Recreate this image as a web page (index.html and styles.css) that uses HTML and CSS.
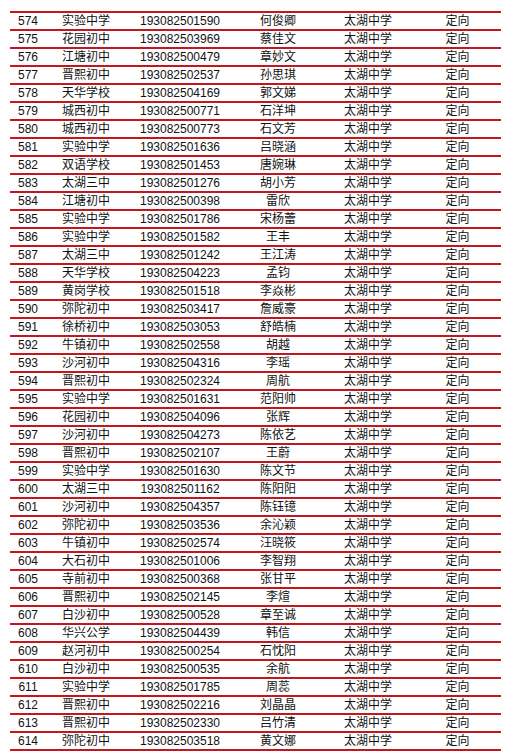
FILE: index.html
```html
<!DOCTYPE html>
<html lang="zh">
<head>
<meta charset="utf-8">
<link rel="stylesheet" href="styles.css">
</head>
<body>
<table class="list">
<colgroup><col class="c1"><col class="c2"><col class="c3"><col class="c4"><col class="c5"><col class="c6"></colgroup>
<tbody>
<tr><td>574</td><td>实验中学</td><td>193082501590</td><td>何俊卿</td><td>太湖中学</td><td>定向</td></tr>
<tr><td>575</td><td>花园初中</td><td>193082503969</td><td>蔡佳文</td><td>太湖中学</td><td>定向</td></tr>
<tr><td>576</td><td>江塘初中</td><td>193082500479</td><td>章妙文</td><td>太湖中学</td><td>定向</td></tr>
<tr><td>577</td><td>晋熙初中</td><td>193082502537</td><td>孙思琪</td><td>太湖中学</td><td>定向</td></tr>
<tr><td>578</td><td>天华学校</td><td>193082504169</td><td>郭文娣</td><td>太湖中学</td><td>定向</td></tr>
<tr><td>579</td><td>城西初中</td><td>193082500771</td><td>石洋坤</td><td>太湖中学</td><td>定向</td></tr>
<tr><td>580</td><td>城西初中</td><td>193082500773</td><td>石文芳</td><td>太湖中学</td><td>定向</td></tr>
<tr><td>581</td><td>实验中学</td><td>193082501636</td><td>吕晓涵</td><td>太湖中学</td><td>定向</td></tr>
<tr><td>582</td><td>双语学校</td><td>193082501453</td><td>唐婉琳</td><td>太湖中学</td><td>定向</td></tr>
<tr><td>583</td><td>太湖三中</td><td>193082501276</td><td>胡小芳</td><td>太湖中学</td><td>定向</td></tr>
<tr><td>584</td><td>江塘初中</td><td>193082500398</td><td>雷欣</td><td>太湖中学</td><td>定向</td></tr>
<tr><td>585</td><td>实验中学</td><td>193082501786</td><td>宋杨蕾</td><td>太湖中学</td><td>定向</td></tr>
<tr><td>586</td><td>实验中学</td><td>193082501582</td><td>王丰</td><td>太湖中学</td><td>定向</td></tr>
<tr><td>587</td><td>太湖三中</td><td>193082501242</td><td>王江涛</td><td>太湖中学</td><td>定向</td></tr>
<tr><td>588</td><td>天华学校</td><td>193082504223</td><td>孟钧</td><td>太湖中学</td><td>定向</td></tr>
<tr><td>589</td><td>黄岗学校</td><td>193082501518</td><td>李焱彬</td><td>太湖中学</td><td>定向</td></tr>
<tr><td>590</td><td>弥陀初中</td><td>193082503417</td><td>詹威豪</td><td>太湖中学</td><td>定向</td></tr>
<tr><td>591</td><td>徐桥初中</td><td>193082503053</td><td>舒皓楠</td><td>太湖中学</td><td>定向</td></tr>
<tr><td>592</td><td>牛镇初中</td><td>193082502558</td><td>胡越</td><td>太湖中学</td><td>定向</td></tr>
<tr><td>593</td><td>沙河初中</td><td>193082504316</td><td>李瑶</td><td>太湖中学</td><td>定向</td></tr>
<tr><td>594</td><td>晋熙初中</td><td>193082502324</td><td>周航</td><td>太湖中学</td><td>定向</td></tr>
<tr><td>595</td><td>实验中学</td><td>193082501631</td><td>范阳帅</td><td>太湖中学</td><td>定向</td></tr>
<tr><td>596</td><td>花园初中</td><td>193082504096</td><td>张辉</td><td>太湖中学</td><td>定向</td></tr>
<tr><td>597</td><td>沙河初中</td><td>193082504273</td><td>陈依艺</td><td>太湖中学</td><td>定向</td></tr>
<tr><td>598</td><td>晋熙初中</td><td>193082502107</td><td>王蔚</td><td>太湖中学</td><td>定向</td></tr>
<tr><td>599</td><td>实验中学</td><td>193082501630</td><td>陈文节</td><td>太湖中学</td><td>定向</td></tr>
<tr><td>600</td><td>太湖三中</td><td>193082501162</td><td>陈阳阳</td><td>太湖中学</td><td>定向</td></tr>
<tr><td>601</td><td>沙河初中</td><td>193082504357</td><td>陈钰镱</td><td>太湖中学</td><td>定向</td></tr>
<tr><td>602</td><td>弥陀初中</td><td>193082503536</td><td>余沁颖</td><td>太湖中学</td><td>定向</td></tr>
<tr><td>603</td><td>牛镇初中</td><td>193082502574</td><td>汪晓筱</td><td>太湖中学</td><td>定向</td></tr>
<tr><td>604</td><td>大石初中</td><td>193082501006</td><td>李智翔</td><td>太湖中学</td><td>定向</td></tr>
<tr><td>605</td><td>寺前初中</td><td>193082500368</td><td>张甘平</td><td>太湖中学</td><td>定向</td></tr>
<tr><td>606</td><td>晋熙初中</td><td>193082502145</td><td>李煊</td><td>太湖中学</td><td>定向</td></tr>
<tr><td>607</td><td>白沙初中</td><td>193082500528</td><td>章至诚</td><td>太湖中学</td><td>定向</td></tr>
<tr><td>608</td><td>华兴公学</td><td>193082504439</td><td>韩信</td><td>太湖中学</td><td>定向</td></tr>
<tr><td>609</td><td>赵河初中</td><td>193082500254</td><td>石忱阳</td><td>太湖中学</td><td>定向</td></tr>
<tr><td>610</td><td>白沙初中</td><td>193082500535</td><td>余航</td><td>太湖中学</td><td>定向</td></tr>
<tr><td>611</td><td>实验中学</td><td>193082501785</td><td>周蕊</td><td>太湖中学</td><td>定向</td></tr>
<tr><td>612</td><td>晋熙初中</td><td>193082502216</td><td>刘晶晶</td><td>太湖中学</td><td>定向</td></tr>
<tr><td>613</td><td>晋熙初中</td><td>193082502330</td><td>吕竹清</td><td>太湖中学</td><td>定向</td></tr>
<tr><td>614</td><td>弥陀初中</td><td>193082503518</td><td>黄文娜</td><td>太湖中学</td><td>定向</td></tr>
</tbody>
</table>
</body>
</html>
```

FILE: styles.css
```css
html, body {
  margin: 0;
  padding: 0;
  background: #ffffff;
}

body {
  padding: 11px 0 0 10px;
  font-family: "Liberation Sans", "Noto Sans CJK SC", sans-serif;
  font-size: 12px;
  color: #111111;
}

.list {
  width: 491px;
  border-collapse: collapse;
  table-layout: fixed;
  border-top: 2px solid #c4161c;
}

.list td {
  height: 16px;
  padding: 0;
  line-height: 16px;
  text-align: center;
  white-space: nowrap;
  border-bottom: 2px solid #c4161c;
  vertical-align: middle;
}

.c1 { width: 36px; }
.c2 { width: 80px; }
.c3 { width: 108px; }
.c4 { width: 88px; }
.c5 { width: 92px; }
.c6 { width: 87px; }
```
